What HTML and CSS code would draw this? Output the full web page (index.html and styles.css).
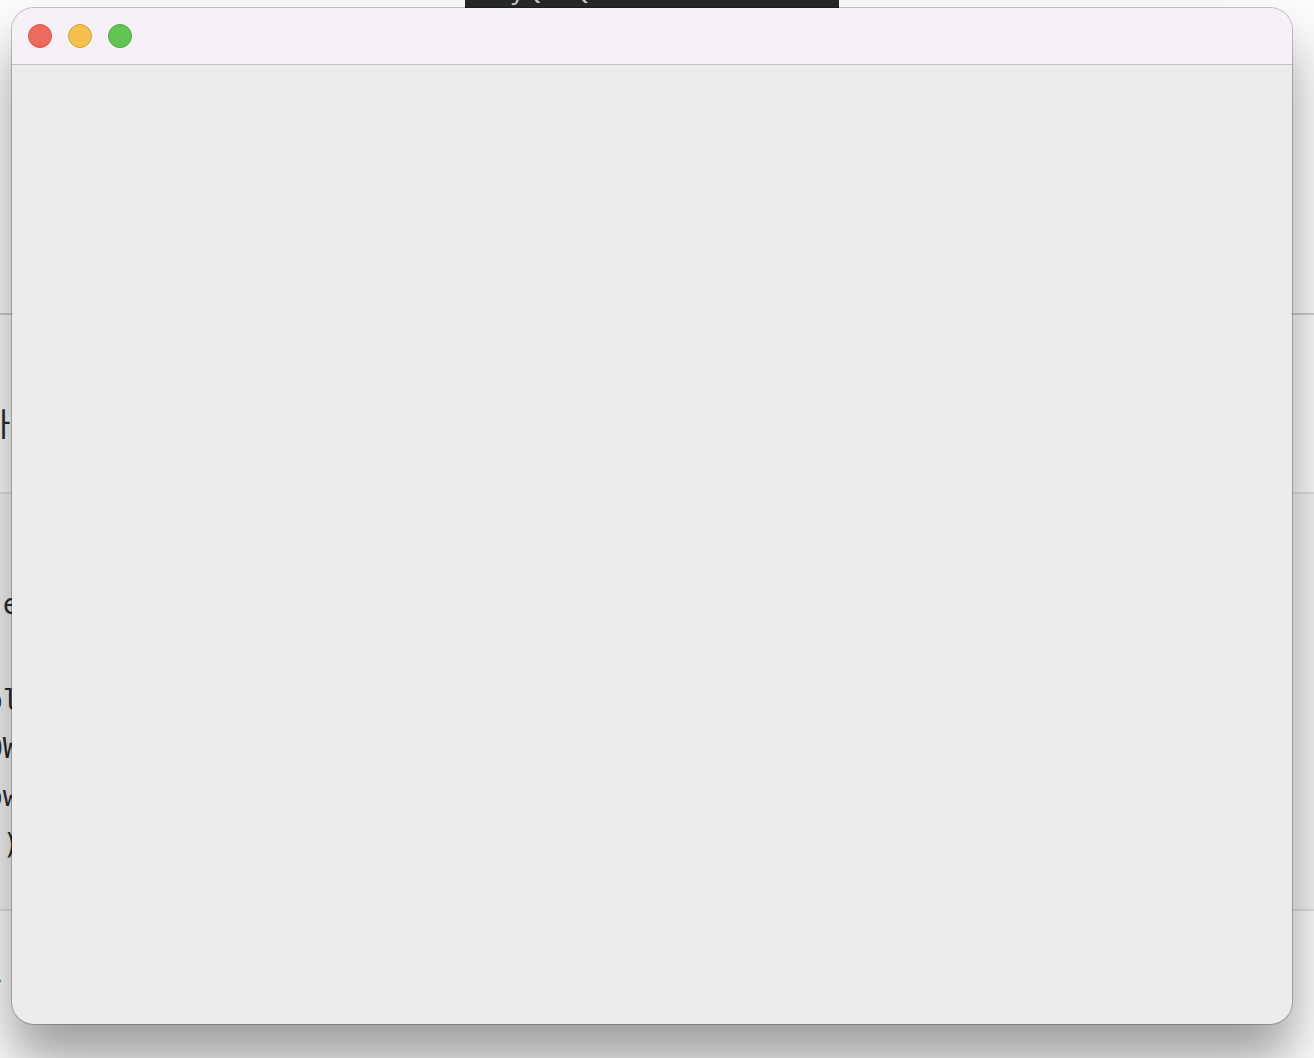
FILE: index.html
```html
<!DOCTYPE html>
<html lang="ko">
<head>
  <meta charset="utf-8">
  <title>Window</title>
  <meta name="viewport" content="width=device-width, initial-scale=1">
  <link rel="stylesheet" href="styles.css">
</head>
<body>
  <div class="desktop">
    <!-- Document behind the window -->
    <main class="document">
      <section class="row intro"></section>
      <section class="row heading"><p>하</p></section>
      <section class="row code">
        <pre> e

ol
OW
ow
 )</pre>
      </section>
      <section class="row footer"><p>다.</p></section>
    </main>
    <div class="tooltip"><span>PyQt5 Qt5</span><span class="version">5.15.2</span></div>

    <!-- Empty application window -->
    <div class="window">
      <header class="titlebar">
        <button type="button" class="dot close" aria-label="Close"></button>
        <button type="button" class="dot minimize" aria-label="Minimize"></button>
        <button type="button" class="dot zoom" aria-label="Zoom"></button>
      </header>
      <div class="content"></div>
    </div>
  </div>
</body>
</html>
```

FILE: styles.css
```css
* {
  box-sizing: border-box;
}
body {
  margin: 0;
  font-family: "Noto Sans", "Noto Sans CJK KR", sans-serif;
  color: #2b2c30;
}
.desktop {
  position: relative;
  min-height: 100vh;
  overflow: hidden;
  background: #fcfcfc;
}
.document {
  position: absolute;
  inset: 0;
}
.row {
  border-bottom: 2px solid #e2e2e2;
}
.row p,
.row pre {
  margin: 0;
  white-space: pre;
}
.intro {
  height: 315px;
  border-color: #cfcfcf;
}
.heading {
  height: 179px;
  padding-top: 83px;
}
.heading p {
  margin-left: -19px;
  font-size: 32px;
  line-height: 48px;
  font-family: "Noto Sans CJK KR", sans-serif;
}
.code {
  height: 417px;
  padding-top: 87px;
  background: #f4f4f4;
}
.code pre {
  margin-left: -14px;
  font-family: "DejaVu Sans Mono", monospace;
  font-size: 28px;
  line-height: 48px;
}
.footer {
  border: none;
  padding-top: 36px;
}
.footer p {
  margin-left: -31px;
  font-size: 28px;
  line-height: 48px;
  font-family: "Noto Sans CJK KR", sans-serif;
}
.tooltip {
  position: absolute;
  top: -26px;
  left: 465px;
  display: flex;
  justify-content: space-between;
  width: 374px;
  height: 34px;
  padding: 0 38px 0 32px;
  background: #272828;
  color: #d0d0d0;
  font-family: "Noto Sans", sans-serif;
  font-size: 24px;
  line-height: 32px;
  white-space: pre;
}
.version {
  color: #8a8a8a;
}
.window {
  position: absolute;
  inset: 8px 22px 34px 12px;
  display: flex;
  flex-direction: column;
  border-radius: 22px;
  overflow: hidden;
  background: #ececec;
  box-shadow: 0 0 0 1px rgba(0, 0, 0, 0.22), 0 36px 54px rgba(0, 0, 0, 0.38);
}
.titlebar {
  display: flex;
  gap: 16px;
  height: 57px;
  padding: 16px;
  background: #f6f0f7;
  border-bottom: 1px solid #c4c1c5;
}
.dot {
  width: 24px;
  height: 24px;
  padding: 0;
  border: 1px solid;
  border-radius: 50%;
}
.close {
  background: #ed6a5e;
  border-color: #d8544a;
}
.minimize {
  background: #f5bf4f;
  border-color: #d9a13f;
}
.zoom {
  background: #61c554;
  border-color: #4fa73f;
}
.content {
  flex: 1;
}
```
